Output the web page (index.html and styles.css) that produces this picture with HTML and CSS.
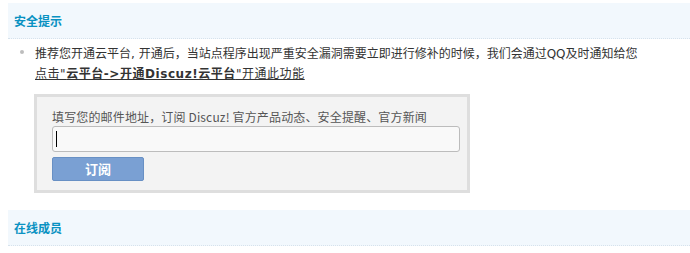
FILE: index.html
```html
<!DOCTYPE html>
<html lang="zh-CN">
<head>
<meta charset="utf-8">
<title>安全提示</title>
<link rel="stylesheet" href="styles.css">
</head>
<body>
<div class="panel">
  <div class="partition">安全提示</div>
  <ul class="tips">
    <li>推荐您开通云平台, 开通后，当站点程序出现严重安全漏洞需要立即进行修补的时候，我们会通过QQ及时通知给您<br>
      <a class="cloud-link" href="#">点击"<b>云平台-&gt;开通Discuz!云平台</b>"开通此功能</a>
    </li>
  </ul>
  <div class="subscribe">
    <div class="subscribe-label">填写您的邮件地址，订阅 Discuz! 官方产品动态、安全提醒、官方新闻</div>
    <div class="email-field"><span class="caret"></span></div>
    <button class="subscribe-btn" type="button">订阅</button>
  </div>
  <div class="partition partition-second">在线成员</div>
</div>
</body>
</html>
```

FILE: styles.css
```css
html, body {
  margin: 0;
  padding: 0;
  background: #fff;
}

body {
  font-family: "Noto Sans CJK SC", "Liberation Sans", sans-serif;
  font-size: 12px;
  color: #333;
}

.panel {
  padding-top: 3px;
}

.partition {
  margin-left: 8px;
  height: 35px;
  line-height: 36px;
  padding-left: 6px;
  background: #f2f8fd;
  border-bottom: 1px dotted #d6e2ec;
  color: #0a92c2;
  font-weight: 700;
  font-size: 12px;
}

.partition-second {
  margin-top: 17px;
}

.tips {
  list-style: none;
  margin: 5px 0 0 0;
  padding: 0 0 0 35px;
  font-family: "DejaVu Sans", "Noto Sans CJK SC", sans-serif;
}

.tips li {
  position: relative;
  line-height: 20px;
}

.tips li::before {
  content: "";
  position: absolute;
  left: -15px;
  top: 6px;
  width: 4px;
  height: 4px;
  border-radius: 50%;
  background: #bdbdbd;
}

.cloud-link {
  color: #333;
  text-decoration: underline;
  letter-spacing: 0.55px;
}

.cloud-link b {
  font-weight: 700;
}

.subscribe {
  margin: 10px 0 0 34px;
  width: 400px;
  padding: 10px 15px 9px 15px;
  border: 3px solid #dedede;
  background: #f3f3f3;
}

.subscribe-label {
  line-height: 19px;
  color: #555;
  letter-spacing: 0.15px;
}

.email-field {
  display: flex;
  align-items: center;
  box-sizing: border-box;
  width: 408px;
  height: 26px;
  border: 1px solid #bcbcbc;
  border-radius: 3px;
  background: #f9f9f9;
  padding-left: 3px;
}

.caret {
  width: 1px;
  height: 16px;
  background: #000;
}

.subscribe-btn {
  display: block;
  margin-top: 5px;
  width: 92px;
  height: 24px;
  padding: 0;
  border: 1px solid #6890c4;
  border-radius: 2px;
  background: #7aa0d3;
  color: #fff;
  font-family: "Noto Sans CJK SC", sans-serif;
  font-size: 13px;
  font-weight: 700;
  line-height: 22px;
}
```
